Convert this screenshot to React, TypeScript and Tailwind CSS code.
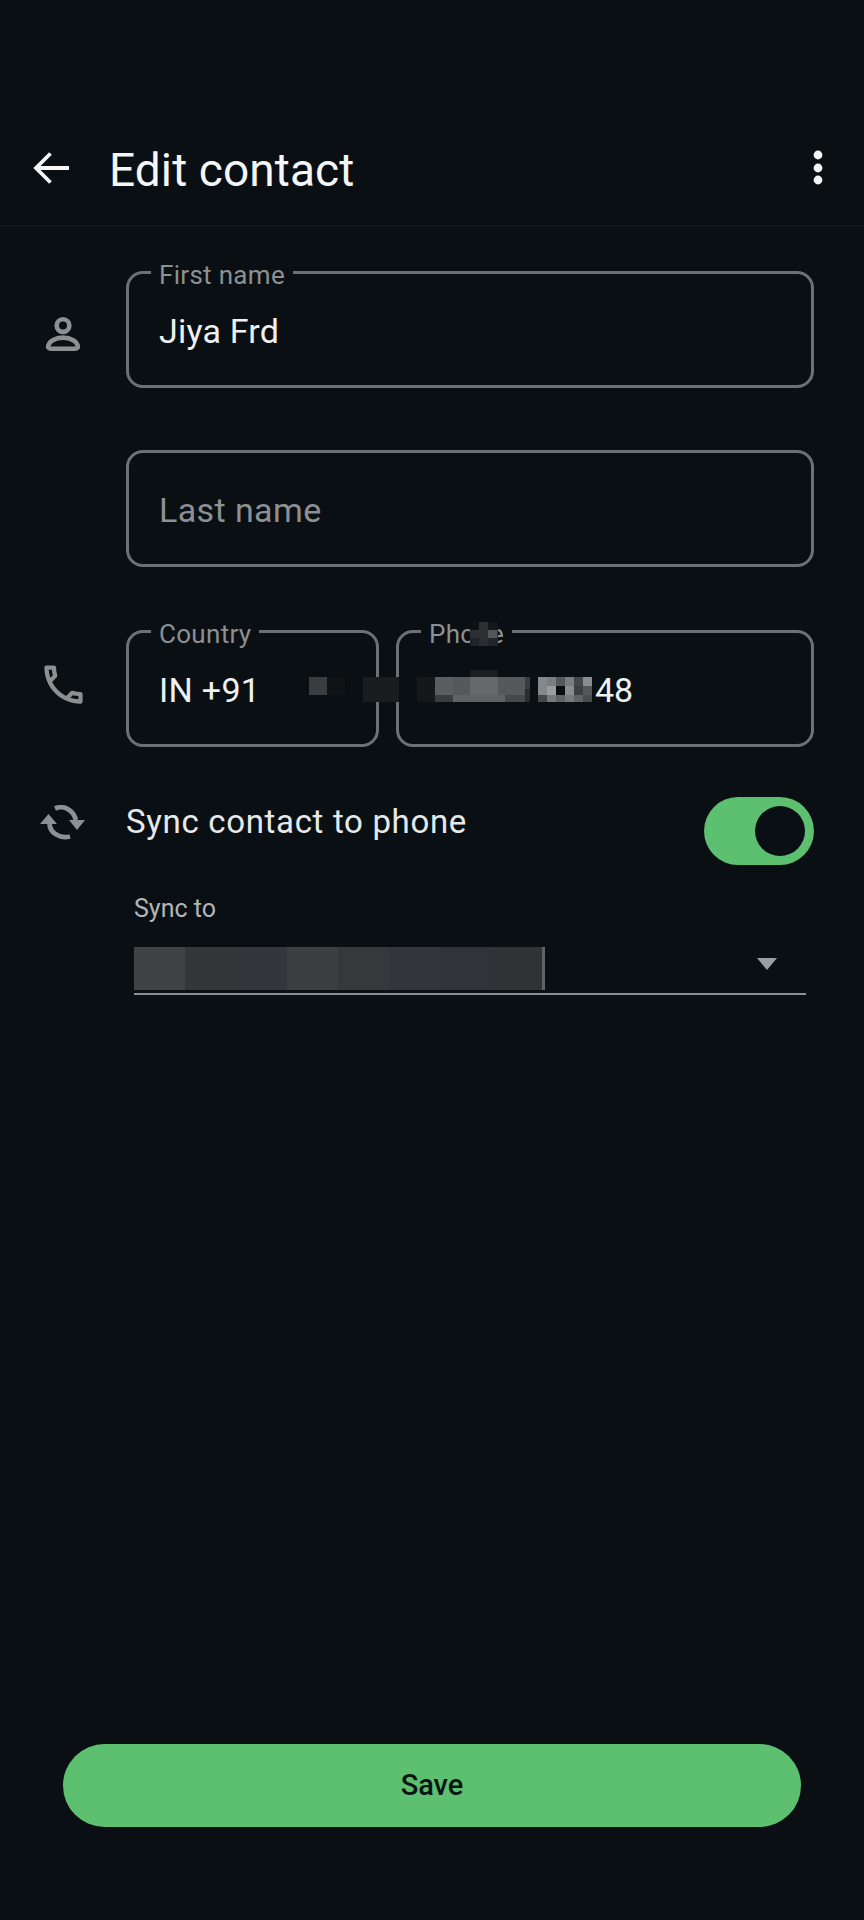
import React from "react";

type Cell = [number, number, number, number, string];

// Obscured regions laid over the phone fields and the account selector.
const mosaic: Cell[] = [
  [470, 622, 9, 8, "#0c1115"], [479, 622, 9, 8, "#2c3033"], [488, 622, 10, 8, "#14181b"],
  [470, 630, 18, 8, "#2d3033"], [488, 630, 9, 8, "#53575a"], [497, 630, 1, 8, "#2d3033"],
  [470, 638, 9, 8, "#1f2326"], [479, 638, 9, 8, "#2a2e31"], [488, 638, 10, 8, "#22262a"],
  [309, 677, 18, 18, "#3a3d40"], [327, 677, 18, 18, "#0f1316"],
  [363, 677, 36, 25, "#1a1d20"], [417, 677, 18, 25, "#14181b"],
  [470, 670, 28, 7, "#1b1e21"],
  [435, 677, 18, 18, "#5a5e60"], [453, 677, 17, 18, "#55595b"], [470, 677, 28, 18, "#66696b"],
  [498, 677, 27, 18, "#56595b"], [525, 677, 5, 12, "#3a3d40"],
  [435, 695, 18, 7, "#3a3d40"], [453, 695, 52, 7, "#606365"], [505, 695, 20, 7, "#45484a"], [525, 689, 5, 13, "#2a2d30"],
  [538, 677, 9, 9, "#85888a"], [547, 677, 9, 9, "#7a7d80"], [556, 677, 9, 9, "#55585a"],
  [565, 677, 9, 9, "#7a7d80"], [574, 677, 9, 9, "#45484a"], [583, 677, 9, 9, "#8a8d8f"],
  [538, 686, 9, 9, "#85888a"], [547, 686, 9, 9, "#9a9d9f"], [556, 686, 9, 9, "#0a0d10"],
  [565, 686, 9, 9, "#8a8d8f"], [574, 686, 9, 9, "#3d4042"], [583, 686, 9, 9, "#55585a"],
  [538, 695, 9, 7, "#45484a"], [547, 695, 9, 7, "#77797b"], [556, 695, 9, 7, "#606365"],
  [565, 695, 9, 7, "#77797b"], [574, 695, 9, 7, "#606365"], [583, 695, 9, 7, "#4a4d4f"],
  [134, 947, 51, 43, "#3f4245"], [185, 947, 51, 43, "#33373a"], [236, 947, 51, 43, "#33363a"],
  [287, 947, 51, 43, "#3b3f41"], [338, 947, 51, 43, "#36393c"], [389, 947, 51, 43, "#323539"],
  [440, 947, 51, 43, "#303337"], [491, 947, 51, 43, "#2f3336"], [542, 947, 3, 43, "#5f6366"],
];

function OutlinedField({
  label,
  className = "",
  children,
}: {
  label?: string;
  className?: string;
  children: React.ReactNode;
}) {
  return (
    <div className={`relative box-border flex h-[117px] items-center rounded-[17px] border-[3px] border-[#6d7174] pl-[30px] pt-[4px] ${className}`}>
      {label && (
        <span className="absolute left-[22px] top-[-15px] bg-[#0a0f13] px-[8px] text-[26px] leading-[32px] tracking-[0.3px] text-[#8c9093]">
          {label}
        </span>
      )}
      {children}
    </div>
  );
}

function Row({ icon, children, className = "" }: { icon?: React.ReactNode; children: React.ReactNode; className?: string }) {
  return (
    <div className={`flex items-center ${className}`}>
      <div className="flex w-[126px] shrink-0 justify-center">{icon}</div>
      <div className="flex flex-1 gap-[17px]">{children}</div>
    </div>
  );
}

export default function App() {
  return (
    <div className="relative flex h-[1920px] w-[864px] flex-col overflow-hidden bg-[#0a0f13] font-['Roboto',sans-serif] text-[#eef1f2]">
      <header className="box-border flex h-[226px] items-center border-b border-[#15191d] pl-[32px] pr-[40px] pt-[111px]">
        <svg width="38" height="36" viewBox="0 0 38 36" fill="none" stroke="#f4f6f7" strokeWidth="3.8" className="shrink-0">
          <path d="M37 18H5M18.500 3.500 4 18l14.500 14.500" />
        </svg>
        <h1 className="ml-[39px] flex-1 pt-[4px] text-[46px] font-normal leading-[52px] tracking-[0.1px] text-[#f4f6f7]">Edit contact</h1>
        <svg width="12" height="38" viewBox="0 0 12 38" fill="#f4f6f7" className="shrink-0">
          <circle cx="6" cy="6" r="4.400" />
          <circle cx="6" cy="19" r="4.400" />
          <circle cx="6" cy="31" r="4.400" />
        </svg>
      </header>

      <main className="flex flex-1 flex-col pr-[50px] pt-[45px]">
        <Row
          icon={
            <svg width="38" height="38" viewBox="0 0 36 36" fill="none" stroke="#8c9093" strokeWidth="4.400" className="mt-[8px]">
              <circle cx="18" cy="10" r="6" />
              <path d="M7 32a4 4 0 0 1-3-1.500C4 25 11 21.500 18 21.500S32 25 32 30.500A4 4 0 0 1 29 32Z" />
            </svg>
          }
        >
          <OutlinedField label="First name" className="w-full">
            <span className="text-[34px] tracking-[0.2px]">Jiya Frd</span>
          </OutlinedField>
        </Row>

        <Row className="mt-[62px]">
          <OutlinedField className="w-full">
            <span className="text-[34px] tracking-[0.4px] text-[#8c9093]">Last name</span>
          </OutlinedField>
        </Row>

        <Row
          className="mt-[63px]"
          icon={
            <svg width="51" height="51" viewBox="0 0 24 24" fill="#8c9093" className="mb-[8px]">
              <path d="M6.54 5c.06.89.21 1.76.45 2.59l-1.2 1.2c-.41-1.2-.67-2.47-.76-3.79h1.51m9.86 12.02c.85.24 1.72.39 2.6.45v1.49c-1.32-.09-2.59-.35-3.8-.75l1.2-1.19M7.5 3H4c-.55 0-1 .45-1 1 0 9.39 7.61 17 17 17 .55 0 1-.45 1-1v-3.49c0-.55-.45-1-1-1-1.24 0-2.45-.2-3.57-.57-.1-.04-.21-.05-.31-.05-.26 0-.51.1-.71.29l-2.2 2.2c-2.83-1.45-5.15-3.76-6.59-6.59l2.2-2.2c.28-.28.36-.67.25-1.02C8.7 6.45 8.5 5.25 8.5 4c0-.55-.45-1-1-1z" />
            </svg>
          }
        >
          <OutlinedField label="Country" className="w-[253px] shrink-0">
            <span className="text-[34px] tracking-[0.3px]">IN +91</span>
          </OutlinedField>
          <OutlinedField label="Phone" className="flex-1">
            <span className="ml-[166px] text-[34px]">48</span>
          </OutlinedField>
        </Row>

        <div className="mt-[50px] flex h-[68px] items-start">
          <div className="flex w-[126px] shrink-0 justify-center">
            <svg width="48" height="36" viewBox="0 0 48 36" fill="none" className="mt-[8px]">
              <path d="M16 3.500C24 0 34 4 37 15" stroke="#8c9093" strokeWidth="4.800" />
              <path d="M30 15h16l-8 10Z" fill="#8c9093" />
              <path d="M10.500 19C11 28 21 34 31 31.500" stroke="#8c9093" strokeWidth="4.800" />
              <path d="M1 19 9.500 9 18 19Z" fill="#8c9093" />
            </svg>
          </div>
          <span className="flex-1 text-[33px] leading-[50px] tracking-[0.67px] text-[#e6e9ea]">Sync contact to phone</span>
          <div className="flex h-[68px] w-[110px] items-center justify-end rounded-full bg-[#5dbf70] pr-[9px]">
            <div className="h-[50px] w-[50px] rounded-full bg-[#0a0f13]" />
          </div>
        </div>

        <div className="ml-[134px] mr-[8px] mt-[28px]">
          <div className="text-[25px] leading-[32px] text-[#b3b6b8]">Sync to</div>
          <div className="flex h-[70px] items-center justify-end border-b-2 border-[#8c9093] pr-[29px] pt-[9px]">
            <svg width="20" height="12" viewBox="0 0 20 12" fill="#9a9ea0">
              <path d="M0 0h20l-10 12Z" />
            </svg>
          </div>
        </div>
      </main>

      <div className="px-[63px] pb-[93px]">
        <button className="flex h-[83px] w-full items-center justify-center rounded-full bg-[#5dbf70] pt-[1px] text-[29px] font-medium text-[#0a1512]">
          Save
        </button>
      </div>

      {mosaic.map(([x, y, w, h, c], i) => (
        <div key={i} className="absolute" style={{ left: x, top: y, width: w, height: h, background: c }} />
      ))}
    </div>
  );
}
